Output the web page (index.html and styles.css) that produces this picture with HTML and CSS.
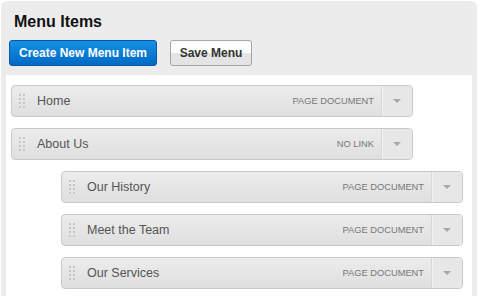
FILE: index.html
```html
<!DOCTYPE html>
<html lang="en">
<head>
  <meta charset="UTF-8"/>
  <title>Menu Items</title>
  <link rel="stylesheet" href="styles.css">
</head>
<body>
  <div class="panel">
    <h2 class="panel-title">Menu Items</h2>
    <div class="toolbar">
      <button class="btn btn-primary">Create New Menu Item</button>
      <button class="btn btn-default">Save Menu</button>
    </div>

    <div class="menu-tree">
      <div class="menu-item">
        <span class="grip"></span>
        <span class="item-name">Home</span>
        <span class="item-type">Page Document</span>
        <span class="item-toggle"><span class="caret"></span></span>
      </div>
      <div class="menu-item">
        <span class="grip"></span>
        <span class="item-name">About Us</span>
        <span class="item-type">No Link</span>
        <span class="item-toggle"><span class="caret"></span></span>
      </div>
      <div class="menu-children">
        <div class="menu-item">
          <span class="grip"></span>
          <span class="item-name">Our History</span>
          <span class="item-type">Page Document</span>
          <span class="item-toggle"><span class="caret"></span></span>
        </div>
        <div class="menu-item">
          <span class="grip"></span>
          <span class="item-name">Meet the Team</span>
          <span class="item-type">Page Document</span>
          <span class="item-toggle"><span class="caret"></span></span>
        </div>
        <div class="menu-item">
          <span class="grip"></span>
          <span class="item-name">Our Services</span>
          <span class="item-type">Page Document</span>
          <span class="item-toggle"><span class="caret"></span></span>
        </div>
      </div>
    </div>
  </div>
</body>
</html>
```

FILE: styles.css
```css
* {
  margin: 0;
  padding: 0;
  box-sizing: border-box;
}

html, body {
  height: 100%;
  overflow: hidden;
}

body {
  font-family: 'Liberation Sans', Arial, sans-serif;
  background: #fff;
  color: #333;
  padding: 1px 2px 0 1px;
}

.panel {
  height: 100%;
  background: #ececec;
  border-radius: 6px 6px 0 0;
  padding: 0 5px;
  display: flex;
  flex-direction: column;
}

.panel-title {
  font-size: 16px;
  font-weight: bold;
  color: #111;
  padding: 12px 0 0 8px;
  line-height: 18px;
}

.toolbar {
  display: flex;
  gap: 13px;
  padding: 9px 0 0 3px;
  margin-bottom: 9px;
}

.btn {
  font-family: 'Liberation Sans', Arial, sans-serif;
  font-size: 12px;
  font-weight: bold;
  height: 26px;
  border-radius: 3px;
  cursor: pointer;
}

.btn-primary {
  width: 148px;
  color: #fff;
  border: 1px solid #0758a8;
  background: linear-gradient(#1590e4, #0069c4);
}

.btn-default {
  width: 82px;
  color: #333;
  border: 1px solid #a5a5a5;
  background: linear-gradient(#fdfdfd 50%, #e4e4e4 50%);
}

.menu-tree {
  flex: 1;
  background: #fff;
  padding: 10px 0 0 5px;
}

.menu-children {
  padding-left: 50px;
}

.menu-item {
  display: flex;
  align-items: center;
  width: 402px;
  height: 32px;
  margin-bottom: 11px;
  border: 1px solid #c9c9c9;
  border-radius: 4px;
  background: linear-gradient(#ececec, #dfdfdf);
}

/* 2 x 4 drag dots */
.grip {
  position: relative;
  width: 6px;
  height: 14px;
  margin: 0 12px 0 7px;
}

.grip::before {
  content: "";
  position: absolute;
  left: 0;
  top: 0;
  width: 2px;
  height: 2px;
  background: #c6c6c6;
  box-shadow: 4px 0 #c6c6c6, 0 4px #c6c6c6, 4px 4px #c6c6c6,
              0 8px #c6c6c6, 4px 8px #c6c6c6, 0 12px #c6c6c6, 4px 12px #c6c6c6;
}

.item-name {
  flex: 1;
  font-size: 12.5px;
  color: #555;
}

.item-type {
  font-size: 9.3px;
  text-transform: uppercase;
  color: #777;
  padding-right: 7px;
}

.item-toggle {
  align-self: stretch;
  width: 31px;
  display: flex;
  align-items: center;
  justify-content: center;
  border-left: 1px solid #d8d8d8;
  box-shadow: inset 1px 0 #f3f3f3;
  background: #e7e7e7;
  border-radius: 0 3px 3px 0;
}

.caret {
  width: 0;
  height: 0;
  border-left: 4px solid transparent;
  border-right: 4px solid transparent;
  border-top: 4px solid #a8a8a8;
}
```
